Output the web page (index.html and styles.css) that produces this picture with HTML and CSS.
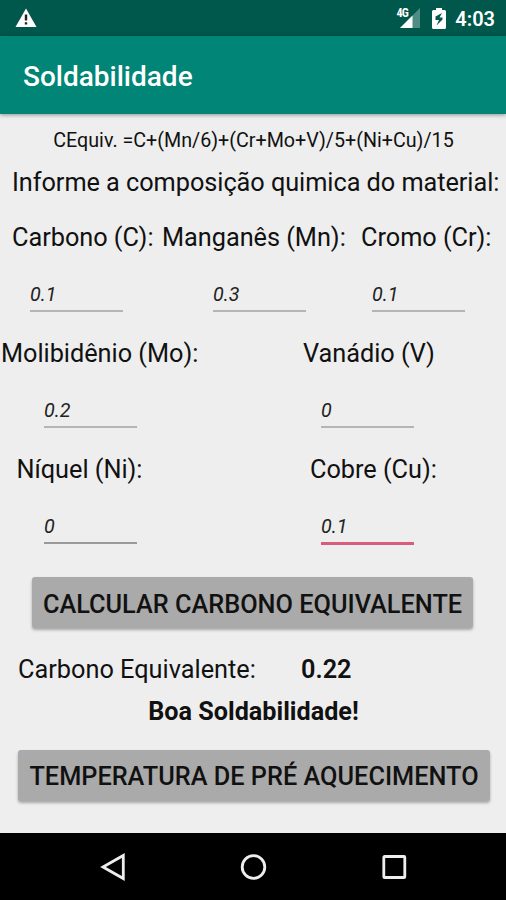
FILE: index.html
```html
<!DOCTYPE html>
<html lang="pt-BR">
<head>
    <meta charset="UTF-8">
    <title>Soldabilidade</title>
    <link rel="stylesheet" href="styles.css">
</head>
<body>

<div class="status-bar">
    <svg class="alerta" width="22" height="20" viewBox="0 0 22 20">
        <path d="M11 0.5L21.5 19H0.5Z" fill="#fff"/>
        <path d="M11 6.5v6M11 14.3v2.2" stroke="#222" stroke-width="2.4"/>
    </svg>
    <div class="status-icons">
        <span class="rede">4G</span>
        <svg class="sinal" width="20" height="20" viewBox="0 0 20 20">
            <path d="M20 0V20H0Z" fill="#4f8d84"/>
            <path d="M12.5 7.5V20H0Z" fill="#fff"/>
        </svg>
        <svg class="bateria" width="14" height="21" viewBox="0 0 14 21">
            <path d="M4 0h6v2h2.5Q14 2 14 3.5v16Q14 21 12.5 21h-11Q0 21 0 19.5v-16Q0 2 1.5 2H4z" fill="#fff"/>
            <path d="M10 5L3.5 8.5V12H7L4.5 17.5L10.5 11.5V9.5H7.5z" fill="#00574b"/>
        </svg>
        <span class="hora">4:03</span>
    </div>
</div>

<div class="app-bar">
    <h1>Soldabilidade</h1>
</div>

<form class="content" id="soldaForm">
    <p class="formula">CEquiv. =C+(Mn/6)+(Cr+Mo+V)/5+(Ni+Cu)/15</p>
    <p class="informe">Informe a composição quimica do material:</p>

    <div class="linha linha1">
        <div class="campo">
            <label for="carbono">Carbono (C):</label>
            <input type="text" id="carbono" value="0.1">
        </div>
        <div class="campo manganes">
            <label for="manganes">Manganês (Mn):</label>
            <input type="text" id="manganes" value="0.3">
        </div>
        <div class="campo cromo">
            <label for="cromo">Cromo (Cr):</label>
            <input type="text" id="cromo" value="0.1">
        </div>
    </div>

    <div class="linha linha2">
        <div class="campo molibdenio">
            <label for="molibdenio">Molibidênio (Mo):</label>
            <input type="text" id="molibdenio" value="0.2">
        </div>
        <div class="campo vanadio">
            <label for="vanadio">Vanádio (V)</label>
            <input type="text" id="vanadio" value="0">
        </div>
    </div>

    <div class="linha linha3">
        <div class="campo niquel">
            <label for="niquel">Níquel (Ni):</label>
            <input type="text" id="niquel" class="fino" value="0">
        </div>
        <div class="campo cobre">
            <label for="cobre">Cobre (Cu):</label>
            <input type="text" id="cobre" class="ativo" value="0.1">
        </div>
    </div>

    <button type="button" class="calcular">CALCULAR CARBONO EQUIVALENTE</button>

    <div class="resultado">
        <span class="rotulo">Carbono Equivalente:</span>
        <span class="valor">0.22</span>
    </div>
    <p class="mensagem">Boa Soldabilidade!</p>

    <button type="button" class="temperatura">TEMPERATURA DE PRÉ AQUECIMENTO</button>
</form>

<div class="nav-bar">
    <svg width="28" height="28" viewBox="0 0 28 28">
        <path d="M24.3 2.5V25.5L4 14Z"/>
    </svg>
    <svg width="28" height="28" viewBox="0 0 28 28">
        <circle cx="14.5" cy="14" r="11.3"/>
    </svg>
    <svg width="28" height="28" viewBox="0 0 28 28">
        <rect x="3.8" y="3.5" width="21" height="21" rx="0.8"/>
    </svg>
</div>

</body>
</html>
```
FILE: styles.css
```css
* {
    box-sizing: border-box;
}
body {
    margin: 0;
    width: 506px;
    height: 900px;
    display: flex;
    flex-direction: column;
    overflow: hidden;
    background-color: #eeeeee;
    color: #111;
    font-family: Roboto, "Liberation Sans", sans-serif;
    font-size: 25.3px;
    line-height: 30px;
}
p, h1 {
    margin: 0;
    white-space: nowrap;
}
.status-bar {
    height: 36px;
    flex: none;
    display: flex;
    justify-content: space-between;
    align-items: flex-start;
    padding: 8px 11px 0 15px;
    background-color: #00574b;
    color: white;
}
.status-icons {
    display: flex;
    align-items: flex-start;
}
.rede {
    font-size: 12px;
    font-weight: bold;
    font-stretch: condensed;
    letter-spacing: -0.6px;
    line-height: 11px;
    margin-right: -8px;
    z-index: 1;
}
.bateria {
    margin: -0.5px 9px 0 12px;
}
.hora {
    font-size: 20px;
    font-weight: 600;
    line-height: 22px;
}
.app-bar {
    height: 78px;
    flex: none;
    padding: 25px 23px 0;
    background-color: #008577;
    box-shadow: 0 1px 4px rgba(0, 0, 0, 0.4);
    z-index: 1;
}
h1 {
    color: white;
    font-size: 28px;
    font-weight: 500;
    line-height: 32px;
}
.content {
    flex: 1;
    padding-top: 15px;
}
.formula {
    padding-left: 1px;
    font-size: 19.7px;
    line-height: 24px;
    text-align: center;
}
.informe {
    margin: 15px 0 25px 12px;
    letter-spacing: -0.05px;
}
.linha {
    display: grid;
    height: 116px;
}
.linha1 {
    grid-template-columns: 150px 199px 1fr;
    padding-left: 12px;
}
.linha2, .linha3 {
    grid-template-columns: 302px 1fr;
}
.campo {
    display: flex;
    flex-direction: column;
    align-items: flex-start;
}
.campo label {
    white-space: nowrap;
    letter-spacing: -0.03px;
}
.campo input {
    width: 93px;
    height: 41px;
    margin: 18px 0 0 18px;
    padding: 8px 0 0;
    border: none;
    border-bottom: 2px solid #b5b5b5;
    outline: none;
    background: none;
    color: #222;
    font-family: inherit;
    font-size: 19.7px;
    font-style: italic;
}
.manganes input {
    margin-left: 51px;
}
.cromo input {
    margin-left: 11px;
}
.molibdenio label, .vanadio label {
    margin-left: 1px;
}
.linha2 input {
    margin-left: 44px;
}
.linha3 input {
    margin-left: 44px;
}
.niquel label {
    margin-left: 16.5px;
}
.cobre label {
    margin-left: 8px;
}
.vanadio input, .cobre input {
    margin-left: 19px;
}
.campo input.fino {
    border-bottom-color: #999;
}
.campo input.ativo {
    height: 42px;
    border-bottom: 3px solid #d95c7e;
}
button {
    display: block;
    height: 51px;
    padding: 0;
    border: none;
    border-radius: 3px;
    background-color: #aaaaaa;
    box-shadow: 0 2px 3px rgba(0, 0, 0, 0.3);
    color: #111;
    font-family: inherit;
    font-size: 25.3px;
    font-weight: 500;
    white-space: nowrap;
}
.calcular {
    width: 441px;
    margin: 6px 0 0 32px;
    padding-top: 3px;
}
.resultado {
    display: flex;
    margin: 27px 0 0 18px;
}
.rotulo {
    width: 283px;
}
.valor {
    font-weight: 600;
}
.mensagem {
    margin-top: 12px;
    padding-left: 1px;
    font-size: 25.2px;
    font-weight: bold;
    text-align: center;
}
.temperatura {
    width: 472px;
    margin: 23px 0 0 18px;
    padding-top: 1px;
}
.nav-bar {
    height: 67px;
    flex: none;
    display: flex;
    justify-content: center;
    align-items: center;
    gap: 112.5px;
    background-color: black;
}
.nav-bar svg {
    fill: none;
    stroke: #eee;
    stroke-width: 2.8;
}
```
